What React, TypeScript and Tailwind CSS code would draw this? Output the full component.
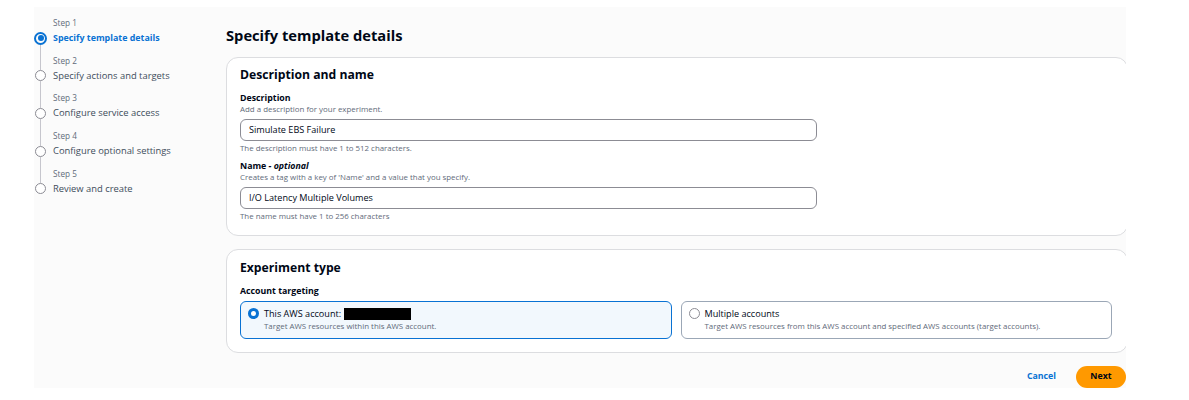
import React from "react";

const steps = [
  { n: 1, label: "Specify template details" },
  { n: 2, label: "Specify actions and targets" },
  { n: 3, label: "Configure service access" },
  { n: 4, label: "Configure optional settings" },
  { n: 5, label: "Review and create" },
];

const font = { fontFamily: '"Open Sans", "Noto Sans", sans-serif' };

const Sidebar = () => (
  <div className="w-[192px] shrink-0 pt-[9px]">
    {steps.map((s, i) => (
      <div key={s.n} className="flex">
        <div className="flex w-[13px] shrink-0 flex-col items-center">
          {i === 0 ? (
            <>
              <div className="h-[15.5px] w-px" />
              <div className="flex h-[13px] w-[13px] items-center justify-center rounded-full border-2 border-[#0972d3]">
                <div className="h-[6px] w-[6px] rounded-full bg-[#0972d3]" />
              </div>
            </>
          ) : (
            <>
              <div className="h-[16.5px] w-px bg-[#c6c6cd]" />
              <div className="h-[11px] w-[11px] rounded-full border border-[#8c8c94] bg-white" />
            </>
          )}
          {i < steps.length - 1 && <div className="w-px flex-1 bg-[#c6c6cd]" />}
        </div>
        <div className="pb-[7.7px] pl-[6px]">
          <div className="text-[8.2px] leading-[14px] text-[#5f6b7a]">Step {s.n}</div>
          <div
            className={
              i === 0
                ? "text-[8.9px] font-bold leading-[16px] text-[#0972d3]"
                : "text-[9.4px] leading-[16px] text-[#414d5c]"
            }
          >
            {s.label}
          </div>
        </div>
      </div>
    ))}
  </div>
);

const Field = ({
  label,
  optional,
  desc,
  value,
  hint,
}: {
  label: string;
  optional?: boolean;
  desc: string;
  value: string;
  hint: string;
}) => (
  <div>
    <div className="text-[8.8px] font-bold leading-[12px] text-[#000716]">
      {label}
      {optional && <i> - optional</i>}
    </div>
    <div className="text-[7.9px] leading-[11px] text-[#5f6b7a]">{desc}</div>
    <div className="mt-[4px] flex h-[22px] w-[577px] items-center rounded-[6px] border border-[#8c8c94] bg-white px-[8px] text-[9.1px] text-[#000716]">
      {value}
    </div>
    <div className="mt-[2px] text-[7.9px] leading-[11px] text-[#5f6b7a]">{hint}</div>
  </div>
);

const Tile = ({
  selected,
  title,
  desc,
  redacted,
}: {
  selected?: boolean;
  title: string;
  desc: string;
  redacted?: boolean;
}) => (
  <div
    className={
      selected
        ? "flex h-[38px] flex-1 rounded-[6px] border border-[#0972d3] bg-[#f2f8fd] pl-[7px] pt-[5px]"
        : "flex h-[38px] flex-1 rounded-[6px] border border-[#9ba7b6] bg-white pl-[7px] pt-[5px]"
    }
  >
    {selected ? (
      <div className="mt-[1px] flex h-[11px] w-[11px] items-center justify-center rounded-full bg-[#0972d3]">
        <div className="h-[5px] w-[5px] rounded-full bg-white" />
      </div>
    ) : (
      <div className="mt-[1px] h-[11px] w-[11px] rounded-full border border-[#8c8c94] bg-white" />
    )}
    <div className="ml-[5px]">
      <div className="flex items-center text-[9.1px] leading-[13px] text-[#000716]">
        {title}
        {redacted && <span className="ml-[3px] inline-block h-[12px] w-[67px] bg-black" />}
      </div>
      <div className="text-[7.9px] leading-[12px] text-[#5f6b7a]">{desc}</div>
    </div>
  </div>
);

export default function App() {
  return (
    <div className="h-[400px] w-full bg-white" style={font}>
      <div className="ml-[34px] mt-[7px] flex h-[381px] w-[1092px] overflow-hidden bg-[#fbfbfb]">
        <Sidebar />
        <div className="flex min-w-0 flex-1 flex-col pt-[18px]">
          <h1 className="text-[14.7px] font-bold leading-[20px] text-[#000716]">Specify template details</h1>
          <div className="mr-[-2px] mt-[12px] rounded-[12px] border border-[#dcdde0] bg-white px-[13px] pb-[13px] pt-[8px]">
            <h2 className="text-[12.2px] font-bold leading-[18px] text-[#000716]">Description and name</h2>
            <div className="mt-[8px] flex flex-col gap-[6px]">
              <Field
                label="Description"
                desc="Add a description for your experiment."
                value="Simulate EBS Failure"
                hint="The description must have 1 to 512 characters."
              />
              <Field
                label="Name"
                optional
                desc="Creates a tag with a key of 'Name' and a value that you specify."
                value="I/O Latency Multiple Volumes"
                hint="The name must have 1 to 256 characters"
              />
            </div>
          </div>
          <div className="mr-[-2px] mt-[13px] rounded-[12px] border border-[#dcdde0] bg-white px-[13px] pb-[13px] pt-[9px]">
            <h2 className="text-[12.2px] font-bold leading-[18px] text-[#000716]">Experiment type</h2>
            <div className="mt-[8px] text-[8.8px] font-bold leading-[12px] text-[#000716]">Account targeting</div>
            <div className="mr-[2px] mt-[4px] flex gap-[9px]">
              <Tile selected title="This AWS account:" redacted desc="Target AWS resources within this AWS account." />
              <Tile
                title="Multiple accounts"
                desc="Target AWS resources from this AWS account and specified AWS accounts (target accounts)."
              />
            </div>
          </div>
          <div className="mt-[13px] flex items-center justify-end gap-[20px]">
            <span className="text-[8.8px] font-bold text-[#0972d3]">Cancel</span>
            <div className="flex h-[22px] w-[50px] items-center justify-center rounded-full bg-[#ff9900] text-[8.8px] font-bold text-[#000716]">
              Next
            </div>
          </div>
        </div>
      </div>
    </div>
  );
}
